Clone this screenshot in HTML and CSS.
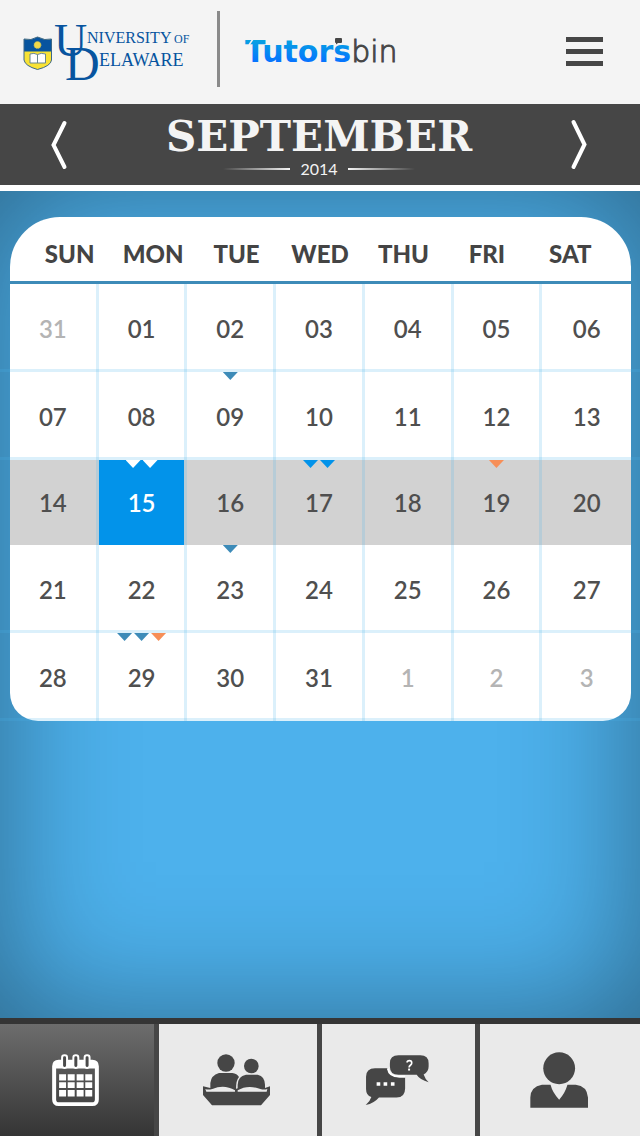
FILE: index.html
```html
<!DOCTYPE html>
<html lang="en">
<head>
<meta charset="utf-8">
<meta name="viewport" content="width=device-width, initial-scale=1">
<title>Tutorsbin – September 2014</title>
<link rel="stylesheet" href="styles.css">
</head>
<body>
<header class="top">
  <svg class="logo" width="167" height="66" viewBox="23 16 167 66" role="img" aria-label="University of Delaware">
    <path d="M24 39Q31 41 37.500 37Q45 41 51.500 39V60Q51 66 37.500 69.500Q25 66 24 60Z" fill="#f8e235"/>
    <path d="M24 39Q31 41 37.500 37Q45 41 51.500 39V51.500H24Z" fill="#07549f"/>
    <path d="M24 39Q31 41 37.500 37Q45 41 51.500 39V60Q51 66 37.500 69.500Q25 66 24 60Z" fill="none" stroke="#3c6788"/>
    <circle cx="37.500" cy="45" r="3.500" fill="#f0d84a" stroke="#b9b45c" stroke-dasharray="1 1"/>
    <path d="M30 54Q34 52.500 37.500 54.500Q41 52.500 45.500 54V63H30Z" fill="#fff" stroke="#6b8790"/>
    <path d="M37.500 54.500V63" stroke="#6b8790"/>
    <g class="logo-serif">
      <text x="54" y="56" font-size="46">U</text>
      <text x="65" y="80" font-size="48">D</text>
      <text x="87" y="43" font-size="16">NIVERSITY</text>
      <text x="174" y="43" font-size="12">OF</text>
      <text x="99" y="66" font-size="18">ELAWARE</text>
    </g>
  </svg>
  <span class="divider"></span>
  <svg class="brand" width="154" height="42" viewBox="245 28 154 42" role="img" aria-label="Tutorsbin">
    <defs>
      <linearGradient id="brand-blue" gradientUnits="userSpaceOnUse" x1="0" y1="40" x2="0" y2="62">
        <stop offset="0" stop-color="#06a2e2"/><stop offset="1" stop-color="#0673ff"/>
      </linearGradient>
    </defs>
    <text class="brand-text" x="245" y="62"><tspan class="brand-bold">Tutors</tspan><tspan class="brand-thin">bin</tspan></text>
    <path d="M249 45L253 39" stroke="#f4f4f4" stroke-width="1.500"/>
    <path d="M336 38H341Q342 38 342 39V42Q342 43 341 43H338L336 44.500V43Q335 43 335 42V39Q335 38 336 38Z" fill="#464646"/>
  </svg>
  <button class="menu" aria-label="Menu">
    <svg width="37" height="34" viewBox="0 0 37 34"><path d="M0 5H37V10H0ZM0 17H37V22H0ZM0 29H37V34H0Z" fill="#464646"/></svg>
  </button>
</header>

<section class="month">
  <button class="arrow" aria-label="Previous month">
    <svg width="20" height="50" viewBox="0 0 20 50"><path d="M15.500 3L4.500 25L15.500 47"/></svg>
  </button>
  <div class="month-title">
    <h1 class="month-name">SEPTEMBER</h1>
    <p class="year">2014</p>
  </div>
  <button class="arrow" aria-label="Next month">
    <svg width="20" height="50" viewBox="0 0 20 50"><path d="M4.500 2L15.500 24.500L4.500 47"/></svg>
  </button>
</section>

<main class="stage">
  <table class="calendar">
    <thead>
      <tr class="days"><th>SUN</th><th>MON</th><th>TUE</th><th>WED</th><th>THU</th><th>FRI</th><th>SAT</th></tr>
    </thead>
    <tbody>
      <tr class="week">
        <td class="muted"><button>31</button></td><td><button>01</button></td><td><button>02</button></td><td><button>03</button></td><td><button>04</button></td><td><button>05</button></td><td><button>06</button></td>
      </tr>
      <tr class="week">
        <td><button>07</button></td><td><button>08</button></td>
        <td><span class="marks"><i class="mark"></i></span><button>09</button></td>
        <td><button>10</button></td><td><button>11</button></td><td><button>12</button></td><td><button>13</button></td>
      </tr>
      <tr class="week current">
        <td><button>14</button></td>
        <td class="today"><span class="marks"><i class="mark white"></i><i class="mark white"></i></span><button aria-current="date">15</button></td>
        <td><button>16</button></td>
        <td><span class="marks"><i class="mark bright"></i><i class="mark bright"></i></span><button>17</button></td>
        <td><button>18</button></td>
        <td><span class="marks"><i class="mark orange"></i></span><button>19</button></td>
        <td><button>20</button></td>
      </tr>
      <tr class="week">
        <td><button>21</button></td><td><button>22</button></td>
        <td><span class="marks"><i class="mark"></i></span><button>23</button></td>
        <td><button>24</button></td><td><button>25</button></td><td><button>26</button></td><td><button>27</button></td>
      </tr>
      <tr class="week">
        <td><button>28</button></td>
        <td><span class="marks"><i class="mark"></i><i class="mark"></i><i class="mark orange"></i></span><button>29</button></td>
        <td><button>30</button></td><td><button>31</button></td><td class="muted"><button>1</button></td><td class="muted"><button>2</button></td><td class="muted"><button>3</button></td>
      </tr>
    </tbody>
  </table>
</main>

<nav class="tabs">
  <a class="tab active" href="#calendar" aria-label="Calendar">
    <svg width="47" height="52" viewBox="156 137 141 157">
      <path fill="#fff" fill-rule="evenodd" d="M176 154H277Q297 154 297 174V274Q297 294 277 294H176Q156 294 156 274V174Q156 154 176 154ZM168 181V274Q168 283 177 283H276Q285 283 285 274V181Z"/>
      <g fill="#4a4a4a" stroke="#fff" stroke-width="6"><rect x="186" y="141" width="15" height="38" rx="7"/><rect x="220" y="141" width="15" height="38" rx="7"/><rect x="254" y="141" width="15" height="38" rx="7"/></g>
      <path fill="#fff" d="M177 198h21v19h-21zM203 198h21v19h-21zM230 198h21v19h-21zM256 198h21v19h-21zM177 222h21v18h-21zM203 222h21v18h-21zM230 222h21v18h-21zM256 222h21v18h-21zM177 246h21v19h-21zM203 246h21v19h-21zM230 246h21v19h-21zM256 246h21v19h-21z"/>
    </svg>
  </a>
  <a class="tab" href="#study" aria-label="Study groups">
    <svg width="67" height="52" viewBox="612 139 201 156">
      <g fill="#464646">
        <circle cx="681" cy="166" r="26"/><circle cx="757" cy="175" r="22"/>
        <path d="M634 245V226Q636 203 660 196H700Q714 198 720 208Q711 217 711 245Z"/>
        <path d="M716 245V232Q716 206 741 201H776Q798 206 798 232V245Z"/>
        <path d="M612 236L634 241Q680 228 712 243Q745 228 798 241L813 236V262L786 293H639L612 262Z"/>
      </g>
      <path fill="#eaeaea" d="M619 244Q627 247 640 244Q676 229 708 248V252H622ZM716 248Q746 230 784 244Q796 247 805 244L803 252H716Z"/>
    </svg>
  </a>
  <a class="tab" href="#questions" aria-label="Questions">
    <svg width="64" height="50" viewBox="135 137 193 151">
      <path fill="#464646" d="M165 177H202Q208 203 240 205H256V238Q256 265 230 265H177Q163 282 137 288Q150 278 154 264Q138 260 138 240V203Q138 177 165 177Z"/>
      <path d="M204 178Q208 202 238 202H256" fill="none" stroke="#fff" stroke-width="6"/>
      <path fill="#464646" d="M236 138H302Q327 138 327 162V172Q327 188 312 196Q316 209 327 219Q301 213 291 197H236Q210 197 210 172V162Q210 138 236 138Z"/>
      <path fill="#fff" d="M170 219h11v11h-11zM191 219h11v11h-11zM213 219h11v11h-11z"/>
      <path d="M262 160Q262 154 269 154Q276 154 276 161Q276 165 272 168Q268 171 268 175" fill="none" stroke="#fff" stroke-width="5"/>
      <path fill="#fff" d="M265 178h6v6h-6z"/>
    </svg>
  </a>
  <a class="tab" href="#profile" aria-label="Profile">
    <svg width="58" height="56" viewBox="632 127 175 167">
      <circle cx="720" cy="175" r="48" fill="#464646"/>
      <path fill="#464646" d="M633 294V263Q634 231 668 225H694Q700 249 720 270Q738 250 745 225H770Q804 229 807 263V294Z"/>
    </svg>
  </a>
</nav>
</body>
</html>
```

FILE: styles.css
```css
* {
  box-sizing: border-box;
}

body {
  margin: 0;
  min-height: 100vh;
  display: flex;
  flex-direction: column;
  font-family: Lato, "Open Sans", sans-serif;
  color: #4f4f4f;
}

button {
  padding: 0;
  border: 0;
  background: none;
  color: inherit;
  font: inherit;
  cursor: pointer;
}

svg {
  display: block;
  overflow: visible;
}

/* Header */
.top {
  display: flex;
  align-items: center;
  padding: 11px 37px 17px 23px;
  background: #f4f4f4;
}

.logo-serif {
  fill: #07549f;
  font-family: "Liberation Serif", serif;
}

.divider {
  width: 3px;
  height: 76px;
  margin: 0 25px 0 27px;
  background: #8a8a8a;
}

.brand-text {
  font-family: "DejaVu Sans", sans-serif;
  font-size: 30px;
}

.brand-bold {
  font-weight: 700;
  fill: url(#brand-blue);
}

.brand-thin {
  font-weight: 200;
  fill: #464646;
  stroke: #464646;
  stroke-width: 1px;
}

.menu {
  margin-left: auto;
}

/* Month bar */
.month {
  display: flex;
  align-items: center;
  justify-content: space-between;
  padding: 8px 51px 8px 49px;
  border-bottom: 6px solid #fff;
  background: #464646;
  color: #f4f4f4;
}

.arrow svg {
  fill: none;
  stroke: #fff;
  stroke-width: 4px;
  stroke-linecap: round;
}

.month-title {
  text-align: center;
}

.month-name {
  margin: 0;
  font: 700 42px/49px "DejaVu Serif", serif;
}

.year {
  display: flex;
  align-items: center;
  justify-content: center;
  gap: 10px;
  margin: 0;
  font-size: 16px;
  line-height: 16px;
}

.year::before,
.year::after {
  content: "";
  width: 67px;
  height: 2px;
  background: linear-gradient(to right, transparent, #f4f4f4);
}

.year::after {
  background: linear-gradient(to left, transparent, #f4f4f4);
}

/* Calendar */
.stage {
  flex: 1;
  padding: 26px 9px 26px 10px;
  background: #4db1ec;
  box-shadow: inset 0 0 130px rgba(0, 0, 0, 0.42);
}

.calendar,
.calendar thead,
.calendar tbody {
  display: block;
}

.calendar {
  border-radius: 50px 50px 28px 28px;
  background: #fff;
}

.days,
.week {
  display: grid;
  grid-template-columns: repeat(7, 1fr);
}

.days {
  padding: 22px 19px 12px 18px;
  border-bottom: 3px solid #3d8bb8;
  color: #444;
  font-size: 24px;
  line-height: 30px;
}

.days th {
  padding: 0;
  font-weight: 900;
}

.week {
  position: relative;
  height: 88px;
}

.week::after {
  content: "";
  position: absolute;
  left: -10px;
  right: -9px;
  bottom: 0;
  height: 3px;
  background: rgba(77, 178, 236, 0.2);
  pointer-events: none;
}

.week td {
  position: relative;
  display: flex;
  padding: 0;
  border-right: 3px solid rgba(77, 178, 236, 0.2);
}

.week td:last-child {
  border-right: 0;
}

.week button {
  flex: 1;
  font-size: 24px;
  font-weight: 600;
}

.week .muted {
  color: #b4b4b4;
}

.current {
  height: 85px;
  background: #d2d2d2;
}

.current::after {
  display: none;
}

.week .today {
  background: #0293ea;
  background-clip: padding-box;
  color: #fff;
}

.marks {
  position: absolute;
  top: 0;
  left: 0;
  right: 0;
  display: flex;
  justify-content: center;
  gap: 2px;
}

.mark {
  width: 15px;
  height: 8px;
  background: #3d8bb8;
  clip-path: polygon(0 0, 100% 0, 50% 100%);
}

.bright {
  background: #0293ea;
}

.orange {
  background: #f78f58;
}

.white {
  background: #fff;
}

/* Tab bar */
.tabs {
  display: grid;
  grid-template-columns: 154fr 158fr 153fr 160fr;
  gap: 5px;
  border-top: 6px solid #353535;
  background: #464646;
}

.tab {
  display: flex;
  align-items: center;
  justify-content: center;
  height: 112px;
  padding-right: 3px;
  background: #eaeaea;
}

.active {
  background: linear-gradient(#6d6d6d, #353535);
}
```
